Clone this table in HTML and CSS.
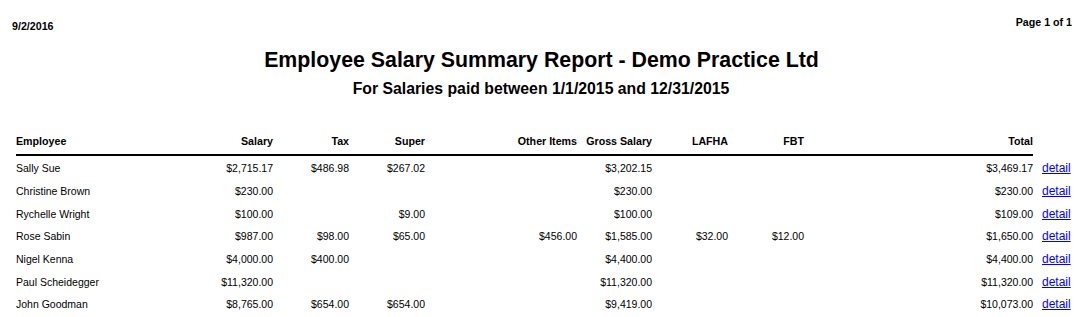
FILE: index.html
```html
<!DOCTYPE html>
<html>
<head>
<meta charset="utf-8">
<title>Employee Salary Summary Report</title>
<link rel="stylesheet" href="styles.css">
</head>
<body>
<div class="page">
  <div class="topbar">
    <span class="date">9/2/2016</span>
    <span class="pager">Page 1 of 1</span>
  </div>
  <h1 class="title">Employee Salary Summary Report - Demo Practice Ltd</h1>
  <h2 class="subtitle">For Salaries paid between 1/1/2015 and 12/31/2015</h2>
  <table class="report">
    <colgroup>
      <col class="c-emp"><col class="c-sal"><col class="c-tax"><col class="c-sup"><col class="c-oth"><col class="c-gro"><col class="c-laf"><col class="c-fbt"><col class="c-tot"><col class="c-det">
    </colgroup>
    <thead>
      <tr class="head">
        <th class="l">Employee</th>
        <th>Salary</th>
        <th>Tax</th>
        <th>Super</th>
        <th>Other Items</th>
        <th>Gross Salary</th>
        <th>LAFHA</th>
        <th>FBT</th>
        <th>Total</th>
        <th class="blank"></th>
      </tr>
    </thead>
    <tbody>
      <tr><td class="l">Sally Sue</td><td>$2,715.17</td><td>$486.98</td><td>$267.02</td><td></td><td>$3,202.15</td><td></td><td></td><td>$3,469.17</td><td class="det"><a href="#">detail</a></td></tr>
      <tr><td class="l">Christine Brown</td><td>$230.00</td><td></td><td></td><td></td><td>$230.00</td><td></td><td></td><td>$230.00</td><td class="det"><a href="#">detail</a></td></tr>
      <tr><td class="l">Rychelle Wright</td><td>$100.00</td><td></td><td>$9.00</td><td></td><td>$100.00</td><td></td><td></td><td>$109.00</td><td class="det"><a href="#">detail</a></td></tr>
      <tr><td class="l">Rose Sabin</td><td>$987.00</td><td>$98.00</td><td>$65.00</td><td>$456.00</td><td>$1,585.00</td><td>$32.00</td><td>$12.00</td><td>$1,650.00</td><td class="det"><a href="#">detail</a></td></tr>
      <tr><td class="l">Nigel Kenna</td><td>$4,000.00</td><td>$400.00</td><td></td><td></td><td>$4,400.00</td><td></td><td></td><td>$4,400.00</td><td class="det"><a href="#">detail</a></td></tr>
      <tr><td class="l">Paul Scheidegger</td><td>$11,320.00</td><td></td><td></td><td></td><td>$11,320.00</td><td></td><td></td><td>$11,320.00</td><td class="det"><a href="#">detail</a></td></tr>
      <tr><td class="l">John Goodman</td><td>$8,765.00</td><td>$654.00</td><td>$654.00</td><td></td><td>$9,419.00</td><td></td><td></td><td>$10,073.00</td><td class="det"><a href="#">detail</a></td></tr>
    </tbody>
  </table>
</div>
</body>
</html>
```

FILE: styles.css
```css
html, body {
  margin: 0;
  padding: 0;
  background: #ffffff;
}

body {
  font-family: "Liberation Sans", Arial, sans-serif;
  color: #000000;
}

.page {
  width: 1088px;
}

.topbar {
  display: flex;
  justify-content: space-between;
  align-items: flex-start;
  padding: 16px 16px 0 12px;
  height: 16px;
}

.date,
.pager {
  font-size: 10.67px;
  font-weight: bold;
  line-height: 12px;
}

.date {
  margin-top: 4px;
}

.title {
  margin: 15px 0 0 0;
  font-size: 21.33px;
  line-height: 26px;
  font-weight: bold;
  text-align: center;
  padding-right: 5px;
}

.subtitle {
  margin: 6px 0 0 0;
  font-size: 15.8px;
  line-height: 20px;
  font-weight: bold;
  text-align: center;
  padding-right: 6px;
}

.report {
  margin: 29px 0 0 16px;
  border-collapse: separate;
  border-spacing: 0;
  table-layout: fixed;
  width: 1067px;
}

.c-emp { width: 184px; }
.c-sal { width: 73px; }
.c-tax { width: 76px; }
.c-sup { width: 76px; }
.c-oth { width: 152px; }
.c-gro { width: 75px; }
.c-laf { width: 76px; }
.c-fbt { width: 76px; }
.c-tot { width: 229px; }
.c-det { width: 50px; }

.report th {
  font-size: 10.67px;
  font-weight: bold;
  text-align: right;
  padding: 0;
  height: 26px;
  line-height: 12px;
  vertical-align: middle;
  border-bottom: 2px solid #000000;
  white-space: nowrap;
}

.report th.blank {
  border-bottom: none;
}

.report td {
  font-size: 10.5px;
  text-align: right;
  padding: 2px 0 0 0;
  height: 20.67px;
  line-height: 12px;
  vertical-align: middle;
  white-space: nowrap;
}

.report .l {
  text-align: left;
}

.report td.det {
  text-align: left;
  padding: 2px 0 0 9px;
  font-size: 12px;
  line-height: 14px;
}

.det a {
  color: #0000ff;
  text-decoration: underline;
}
```
